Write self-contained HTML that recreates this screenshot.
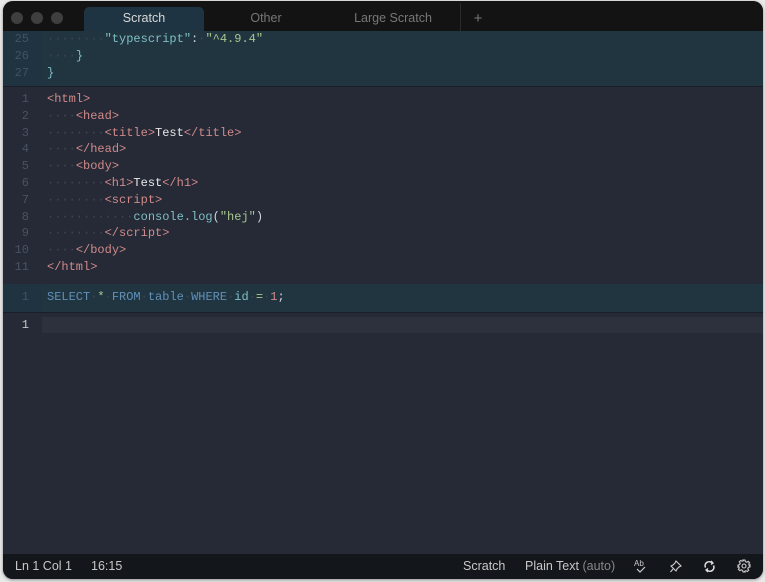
<!DOCTYPE html>
<html><head><meta charset="utf-8"><style>
*{margin:0;padding:0;box-sizing:border-box}
body{width:765px;height:582px;background:#e9e9e9;position:relative;overflow:hidden;font-family:"Liberation Sans",sans-serif}
.win{position:absolute;left:3px;top:1px;width:760px;height:578px;border-radius:10px;overflow:hidden;background:#252a36;box-shadow:0 1px 3px rgba(0,0,0,.4)}
.tabs{position:absolute;left:0;top:0;width:100%;height:30px;background:#131313}
.dot{position:absolute;top:11px;width:12px;height:12px;border-radius:50%;background:#3f3f3f}
.tab{position:absolute;top:6px;height:24px;line-height:23px;text-align:center;font-size:12.5px;color:#777}
.tab.act{background:#1f3442;color:#d8d8d8;border-radius:5px 5px 0 0}
.blk{position:absolute;left:0;width:100%;font-family:"Liberation Mono",monospace;font-size:12px}
.ln{height:16.8px;line-height:16.8px;white-space:pre;position:relative}
.n{position:absolute;left:0;width:26px;text-align:right;color:#4a5260}
.t{position:absolute;left:44px;color:#cfd6dd}
.d{color:#3e4655}
.tg{color:#d08a8a}
.w{color:#e8e8e8}
.s{color:#a8c78e}
.f{color:#7fbfc4}
.k{color:#5f8fb8}
.status{position:absolute;left:0;bottom:0;width:100%;height:25px;background:#13161b;color:#c8c8c8;font-size:12.5px}
.status span{position:absolute;top:5px}
</style></head><body>
<div class="win">
 <div class="tabs">
  <div class="dot" style="left:8px"></div><div class="dot" style="left:28px"></div><div class="dot" style="left:48px"></div>
  <div class="tab act" style="left:81px;width:120px">Scratch</div>
  <div class="tab" style="left:203px;width:120px">Other</div>
  <div class="tab" style="left:325px;width:130px">Large Scratch</div>
  <div style="position:absolute;left:457px;top:2px;width:1px;height:28px;background:#2a2a2a"></div>
  <div class="tab" style="left:463px;width:24px;font-size:15px">+</div>
 </div>
 <div class="blk" style="top:30px;height:55px;background:#213541">
  <div style="position:absolute;left:0;top:0;width:39px;height:55px;background:#1f3340"></div>
  <div class="ln"><span class="n" style="color:#3e5464">25</span><span class="t"><span class="d">········</span><span class="f">"typescript"</span>:<span class="d">·</span><span class="s">"^4.9.4"</span></span></div>
  <div class="ln"><span class="n" style="color:#3e5464">26</span><span class="t"><span class="d">····</span><span class="f">}</span></span></div>
  <div class="ln"><span class="n" style="color:#3e5464">27</span><span class="t"><span class="f">}</span></span></div>
 </div>
 <div style="position:absolute;left:0;top:85px;width:100%;height:1px;background:#1a1e26"></div>
 <div class="blk" style="top:90px">
  <div class="ln"><span class="n">1</span><span class="t"><span class="tg">&lt;html&gt;</span></span></div>
  <div class="ln"><span class="n">2</span><span class="t"><span class="d">····</span><span class="tg">&lt;head&gt;</span></span></div>
  <div class="ln"><span class="n">3</span><span class="t"><span class="d">········</span><span class="tg">&lt;title&gt;</span><span class="w">Test</span><span class="tg">&lt;/title&gt;</span></span></div>
  <div class="ln"><span class="n">4</span><span class="t"><span class="d">····</span><span class="tg">&lt;/head&gt;</span></span></div>
  <div class="ln"><span class="n">5</span><span class="t"><span class="d">····</span><span class="tg">&lt;body&gt;</span></span></div>
  <div class="ln"><span class="n">6</span><span class="t"><span class="d">········</span><span class="tg">&lt;h1&gt;</span><span class="w">Test</span><span class="tg">&lt;/h1&gt;</span></span></div>
  <div class="ln"><span class="n">7</span><span class="t"><span class="d">········</span><span class="tg">&lt;script&gt;</span></span></div>
  <div class="ln"><span class="n">8</span><span class="t"><span class="d">············</span><span class="f">console.log</span>(<span class="s">"hej"</span>)</span></div>
  <div class="ln"><span class="n">9</span><span class="t"><span class="d">········</span><span class="tg">&lt;/script&gt;</span></span></div>
  <div class="ln"><span class="n">10</span><span class="t"><span class="d">····</span><span class="tg">&lt;/body&gt;</span></span></div>
  <div class="ln"><span class="n">11</span><span class="t"><span class="tg">&lt;/html&gt;</span></span></div>
 </div>
 <div class="blk" style="top:283px;height:28px;background:#213541">
  <div style="position:absolute;left:0;top:0;width:39px;height:28px;background:#1f3340"></div>
  <div class="ln" style="top:5px"><span class="n" style="color:#3e5464">1</span><span class="t"><span class="k">SELECT</span><span class="d">·</span><span class="s">*</span><span class="d">·</span><span class="k">FROM</span><span class="d">·</span><span class="k">table</span><span class="d">·</span><span class="k">WHERE</span><span class="d">·</span><span class="f">id</span><span class="d">·</span><span class="s">=</span><span class="d">·</span><span class="tg">1</span>;</span></div>
 </div>
 <div style="position:absolute;left:0;top:311px;width:100%;height:1px;background:#1a1e26"></div>
 <div class="blk" style="top:316px">
  <div style="position:absolute;left:39px;top:0;width:721px;height:16px;background:#2c313d"></div>
  <div class="ln"><span class="n" style="color:#c8c8c8">1</span></div>
 </div>
 <div class="status">
  <span style="left:12px">Ln 1 Col 1</span><span style="left:88px">16:15</span>
  <span style="left:460px">Scratch</span><span style="left:522px">Plain Text <span style="position:static;color:#888">(auto)</span></span>
  <svg style="position:absolute;left:631px;top:5px" width="14" height="15" viewBox="0 0 14 15" fill="none" stroke="#ccc" stroke-width="1.2"><text x="0" y="7" font-size="8" fill="#ccc" stroke="none" font-family="Liberation Sans">Ab</text><path d="M3 10l3 3 5-5"/></svg>
  <svg style="position:absolute;left:667px;top:6px" width="12" height="13" viewBox="0 0 12 13" fill="none" stroke="#ccc" stroke-width="1.1"><path d="M6 1l5 5-2 1-2 2-1 2-5-5 2-1 2-2z M3 9L0.5 12"/></svg>
  <svg style="position:absolute;left:700px;top:6px" width="13" height="13" viewBox="0 0 13 13" fill="none" stroke="#ddd" stroke-width="1.6"><path d="M2.5 7.5A4 4 0 0 1 9 3M10.5 5.5A4 4 0 0 1 4 10"/><path d="M8 1l2 2-2 1.5M5 12L3 10l2-1.5" stroke-width="1.3"/></svg>
  <svg style="position:absolute;left:734px;top:5px" width="14" height="14" viewBox="0 0 14 14" fill="none" stroke="#ccc" stroke-width="1.1"><circle cx="7" cy="7" r="2"/><path d="M6 1h2l.4 1.6 1.4.6 1.4-.9 1.4 1.4-.9 1.4.6 1.4L13 6v2l-1.6.4-.6 1.4.9 1.4-1.4 1.4-1.4-.9-1.4.6L8 13H6l-.4-1.6-1.4-.6-1.4.9-1.4-1.4.9-1.4-.6-1.4L1 8V6l1.6-.4.6-1.4-.9-1.4 1.4-1.4 1.4.9 1.4-.6z"/></svg>
 </div>
</div>
</body></html>
